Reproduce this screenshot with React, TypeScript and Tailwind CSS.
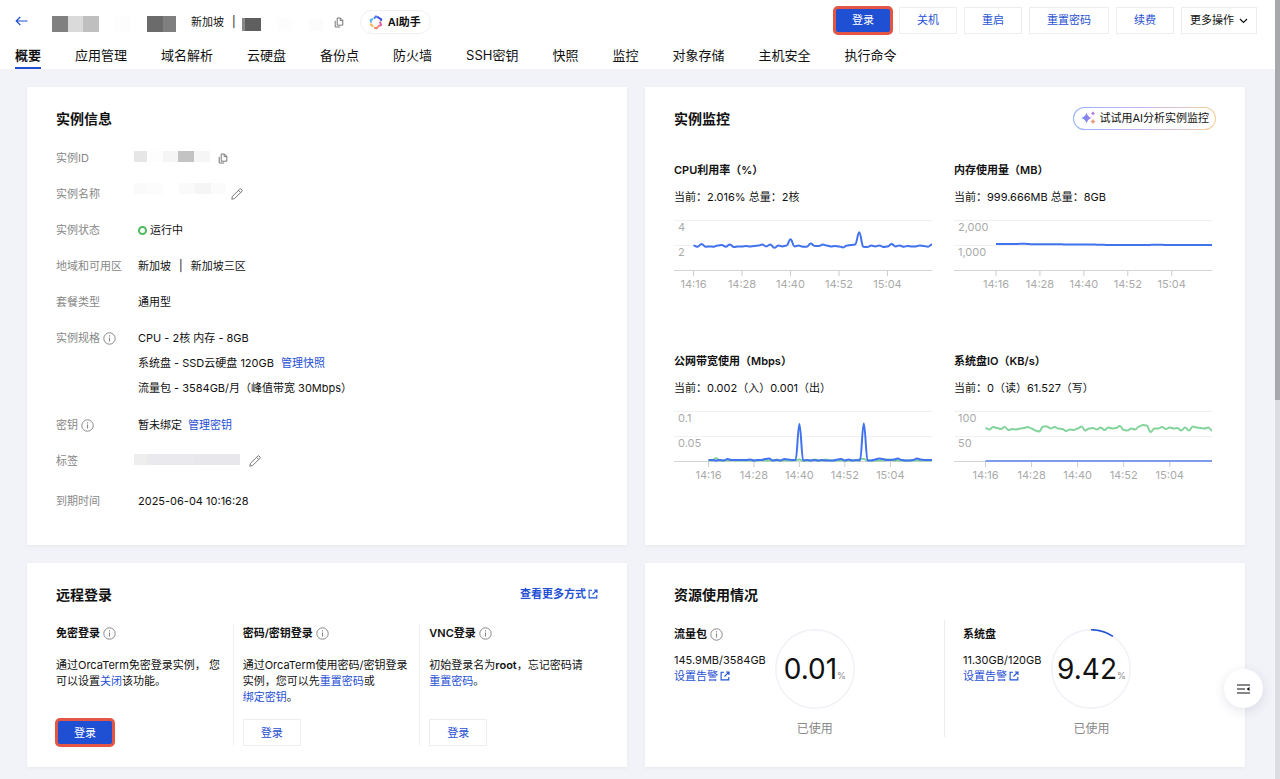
import type { ReactNode } from "react";
import clsx from "clsx";

const tabs = [
  "概要",
  "应用管理",
  "域名解析",
  "云硬盘",
  "备份点",
  "防火墙",
  "SSH密钥",
  "快照",
  "监控",
  "对象存储",
  "主机安全",
  "执行命令",
];

const times = ["14:16", "14:28", "14:40", "14:52", "15:04"];

// one sample per minute
const cpu = [
  1.97, 1.86, 2.08, 1.86, 1.89, 1.86, 1.95, 2, 1.86, 2.05, 1.84, 1.89, 1.89, 1.92, 1.89, 1.92, 1.95, 2.03, 1.89, 2.03,
  1.78, 1.95, 1.89, 1.95, 2.46, 1.89, 1.95, 1.86, 1.86, 2.11, 1.92, 1.92, 2.03, 1.95, 1.89, 1.92, 1.89, 1.81, 1.95, 2.01,
  2.05, 3.02, 1.86, 1.84, 1.95, 1.89, 1.97, 1.84, 1.89, 2.08, 1.89, 1.97, 1.86, 1.92, 1.89, 1.89, 1.97, 1.92, 1.86, 2.05,
];
const memory = [
  1045, 1045, 1044, 1045, 1044, 1043, 1042, 1046, 1048, 1036, 1030, 1028, 1027, 1030, 1031, 1030, 1032, 1030, 1026, 1020,
  1016, 1018, 1020, 1018, 1016, 1016, 1015, 1014, 1012, 1010, 1006, 1004, 1004, 1003, 1004, 1005, 1006, 1006, 1005, 1004,
  1004, 1003, 1004, 1008, 1008, 1007, 1006, 1005, 1000, 996, 996, 998, 1000, 1000, 999, 998, 998, 997, 997, 997,
];
const netIn = [
  0.002, 0.002, 0.001, 0.002, 0.001, 0.004, 0.002, 0.002, 0.002, 0.002, 0.002, 0.003, 0.001, 0.002, 0.002, 0.004, 0.005,
  0.001, 0.002, 0.001, 0.004, 0.003, 0.002, 0.002, 0.074, 0.001, 0.002, 0.001, 0.002, 0.001, 0.002, 0.001, 0.001, 0.001,
  0.003, 0.004, 0.001, 0.003, 0.001, 0.002, 0.001, 0.075, 0.001, 0.001, 0.003, 0.005, 0.004, 0.002, 0.002, 0.003, 0.005,
  0.002, 0.001, 0.001, 0.002, 0.005, 0.003, 0.002, 0.002, 0.002,
];
const netOut = [
  0.001, 0.001, 0.006, 0.001, 0.001, 0.001, 0.002, 0.001, 0.001, 0.001, 0.001, 0.001, 0.001, 0.001, 0.002, 0.001, 0.001,
  0.001, 0.003, 0.001, 0.001, 0.001, 0.001, 0.002, 0.003, 0.001, 0.001, 0.001, 0.003, 0.001, 0.001, 0.003, 0.001, 0.001,
  0.001, 0.001, 0.001, 0.001, 0.001, 0.001, 0.004, 0.004, 0.001, 0.001, 0.001, 0.001, 0.001, 0.003, 0.003, 0.001, 0.001,
  0.001, 0.001, 0.001, 0.001, 0.001, 0.001, 0.001, 0.001, 0.001,
];
const diskWrite = [
  66, 63, 68, 66, 64, 68, 62, 64, 63, 65, 66, 68, 65, 61, 59, 69, 69, 65, 68, 65, 64, 60, 63, 62, 65, 69, 61, 65, 66, 63,
  67, 62, 67, 65, 66, 70, 62, 61, 65, 63, 69, 72, 71, 58, 65, 65, 68, 64, 67, 65, 66, 61, 67, 61, 69, 67, 66, 65, 67, 61,
];
const diskRead = new Array(60).fill(0);

function smoothPath(values: number[], start: number, max: number) {
  const step = (258 - start) / (values.length - 1);
  const y = (v: number) => (55 - (v / max) * 50).toFixed(1);
  return values
    .map((v, i) => {
      const x = start + i * step;
      if (i === 0) return `M${x} ${y(v)}`;
      return `C${(x - step * 0.6).toFixed(1)} ${y(values[i - 1])} ${(x - step * 0.4).toFixed(1)} ${y(v)} ${x.toFixed(1)} ${y(v)}`;
    })
    .join("");
}

interface ChartProps {
  title: string;
  current: string;
  start: number;
  max: number;
  labels: [string, string];
  series: { values: number[]; color: string }[];
}

function Chart({ title, current, start, max, labels, series }: ChartProps) {
  const tickGap = ((258 - start) / 59) * 12;
  return (
    <section>
      <h3 className="font-semibold leading-[18px]">{title}</h3>
      <p className="mt-[9px] leading-[18px]">{current}</p>
      <svg viewBox="0 0 258 76" className="mt-[9px] w-full overflow-visible text-[11px]" role="img" aria-label={title}>
        <path d="M0 5.5H258M0 30.5H258" stroke="#f0f0f0" />
        <path d="M0 55.5H258" stroke="#d4d4d4" />
        {labels.map((label, i) => (
          <text key={label} x="4" y={16 + i * 25} fill="#aaa">
            {label}
          </text>
        ))}
        {times.map((time, i) => (
          <g key={time}>
            <path d={`M${start + i * tickGap} 56v5`} stroke="#ccc" />
            <text x={start + i * tickGap} y="73" textAnchor="middle" fill="#aaa">
              {time}
            </text>
          </g>
        ))}
        {series.map(({ values, color }) => (
          <path
            key={color}
            d={smoothPath(values, start, max)}
            fill="none"
            stroke={color}
            strokeWidth="2"
            strokeLinejoin="round"
          />
        ))}
      </svg>
    </section>
  );
}

function InfoIcon() {
  return (
    <svg width="13" height="13" viewBox="0 0 13 13" fill="none" stroke="#888" className="shrink-0">
      <circle cx="6.5" cy="6.5" r="5.7" />
      <path d="M6.5 5.6v4M6.5 3.2v1.2" strokeWidth="1.1" />
    </svg>
  );
}

function CopyIcon() {
  return (
    <svg width="10" height="11" viewBox="0 0 10 11" fill="none" stroke="#777">
      <path d="M3.2 1h3.3l2.3 2.3v4.9H3.2zM6.2 1v2.6h2.6M1.2 3.8V10h5" />
    </svg>
  );
}

function PencilIcon() {
  return (
    <svg width="12" height="12" viewBox="0 0 12 12" fill="none" stroke="#777" strokeLinejoin="round">
      <path d="M.8 11.2l.6-2.8L8.8 1q.6-.5 1.2 0l1 1q.5.6 0 1.2L3.6 10.6zM7.5 2.3l2.2 2.2" />
    </svg>
  );
}

function ExternalIcon() {
  return (
    <svg width="10" height="10" viewBox="0 0 10 10" fill="none" stroke="currentColor" strokeWidth="1.1">
      <path d="M4 1.2H1.1v7.7h7.7V6M6 1h3v3M8.8 1.2L4.5 5.5" />
    </svg>
  );
}

function AssistantIcon() {
  return (
    <svg width="14" height="15" viewBox="0 0 14 15" fill="none" strokeWidth="2">
      <path d="M2.2 7.6L1.7 4.8l2.4-1" stroke="#62b6f5" />
      <path d="M5 3.6l1.9-2.2 2.3 1" stroke="#4a7cf0" />
      <path d="M8.6 2.2l3.6 2.1-.2 1.5" stroke="#4350e8" />
      <path d="M11 6.6l1 3.5-2.6.8" stroke="#e05f9b" />
      <path d="M9.6 11.2l-2 2.2-2.6-.8" stroke="#f0866a" />
      <path d="M4.2 11.7L1.9 9.4l-.4-.9" stroke="#f2b552" />
    </svg>
  );
}

function SparkleIcon() {
  return (
    <svg width="15" height="14" viewBox="0 0 15 14">
      <defs>
        <linearGradient id="spark" x1="0" x2="1">
          <stop offset="0" stopColor="#5b8df6" />
          <stop offset="1" stopColor="#b57be8" />
        </linearGradient>
      </defs>
      <path d="M5.5 1.5q1 4.4 5.2 5.5-4.2 1.1-5.2 5.500-1-4.400-5.200-5.500 4.200-1.100 5.200-5.500z" fill="url(#spark)" />
      <path d="M12 .3q.5 1.500 2.200 2.100-1.700.6-2.200 2.100-.5-1.500-2.200-2.100Q11.500 1.800 12 .3z" fill="#b779e6" />
      <path d="M12 7.800q.6 2 2.700 2.600-2.100.6-2.700 2.600-.6-2-2.700-2.600 2.100-.6 2.700-2.600z" fill="#ee9a78" />
    </svg>
  );
}

function Link({ children, className }: { children: ReactNode; className?: string }) {
  return (
    <a href="#" className={clsx("whitespace-nowrap text-[#1f50d4]", className)}>
      {children}
    </a>
  );
}

function Button({ children, className }: { children: ReactNode; className?: string }) {
  return (
    <button
      type="button"
      className={clsx(
        "flex h-[27px] min-w-[58px] items-center justify-center gap-1 whitespace-nowrap border px-[17px]",
        className ?? "border-[#ededf0] bg-white text-[#1f50d4]",
      )}
    >
      {children}
    </button>
  );
}

// hidden part of an identifier, shown as grey cells
function Mask({ cells, className }: { cells: string[]; className: string }) {
  return (
    <span className={clsx("flex", className)}>
      {cells.map((cell, i) => (
        <span key={i} className={cell} />
      ))}
    </span>
  );
}

function Card({ title, action, className, children }: {
  title: string;
  action?: ReactNode;
  className?: string;
  children: ReactNode;
}) {
  return (
    <section className={clsx("bg-white pt-5 shadow-[0_1px_3px_rgba(50,60,110,0.06)]", className)}>
      <div className="flex h-[22px] items-center justify-between px-[29px]">
        <h2 className="text-[14px] font-bold">{title}</h2>
        {action}
      </div>
      {children}
    </section>
  );
}

function Row({ label, info, children }: { label: string; info?: boolean; children: ReactNode }) {
  return (
    <div className="flex">
      <dt className="flex h-9 w-[78px] shrink-0 items-center gap-[3px] whitespace-nowrap text-[#888]">
        {label}
        {info && <InfoIcon />}
      </dt>
      <dd className="flex min-h-9 items-center">{children}</dd>
    </div>
  );
}

function Gauge({ value, share }: { value: string; share: number }) {
  return (
    <div className="flex flex-col items-center pt-[9px]">
      <div className="grid size-20 place-items-center">
        <svg viewBox="0 0 80 80" fill="none" className="col-start-1 row-start-1 size-20 -rotate-90">
          <circle cx="40" cy="40" r="39.3" stroke="#f0f0f6" strokeWidth="1.4" />
          {share > 1 && (
            <circle
              cx="40"
              cy="40"
              r="39.3"
              stroke="#2556d6"
              strokeWidth="1.6"
              pathLength="100"
              strokeDasharray={`${share} 100`}
            />
          )}
        </svg>
        <p className="col-start-1 row-start-1 flex items-baseline">
          <span className="text-[28px] leading-9">{value}</span>
          <span className="text-[9px] text-[#888]">%</span>
        </p>
      </div>
      <p className="mt-3 text-[12px] leading-4 text-[#888]">已使用</p>
    </div>
  );
}

export default function App() {
  return (
    <div className="flex min-h-screen bg-[#f2f3f8] font-['Inter','Noto_Sans_CJK_SC',sans-serif] text-[11px] text-[#111]">
      <div className="min-w-0 flex-1">
        <header className="bg-white">
          <div className="flex h-[41px] items-center justify-between pl-[15px] pr-[18px]">
            <div className="flex items-center pt-[3px]">
              <button type="button" aria-label="返回" className="text-[#1f50d4]">
                <svg width="13" height="12" viewBox="0 0 13 12" fill="none" stroke="currentColor" strokeWidth="1.2">
                  <path d="M12.5 5H1.2M5.3 1L1.2 5l4.1 4" />
                </svg>
              </button>
              <Mask
                className="ml-6 mt-1 h-4"
                cells={[
                  "w-4 bg-[#808080]",
                  "w-[15px] bg-[#dadada]",
                  "w-4 bg-[#bfbfbf]",
                  "w-4",
                  "w-4 bg-[#fdfdfd]",
                  "w-4",
                  "w-4 bg-[#6b6b6b]",
                  "w-[13px] bg-[#7f7f7f]",
                ]}
              />
              <span className="ml-[15px]">新加坡</span>
              <span className="ml-2">|</span>
              <Mask
                className="ml-[6px] mt-1 h-[13px]"
                cells={[
                  "w-[3px] bg-[#888]",
                  "w-4 bg-[#5f5f5f]",
                  "w-4",
                  "w-[15px] bg-[#fdfdfd]",
                  "w-4",
                  "w-[15px] bg-[#fcfcfc]",
                ]}
              />
              <button type="button" aria-label="复制" className="ml-[11px]">
                <CopyIcon />
              </button>
              <button
                type="button"
                className="ml-4 flex h-6 items-center gap-[5px] rounded-full border border-[#f0f0f2] pl-2 pr-[9px] font-semibold"
              >
                <AssistantIcon />
                AI助手
              </button>
            </div>
            <div className="flex gap-[7px]">
              <Button className="rounded-sm border-[#1f50d4] bg-[#1f50d4] text-white outline-[3px] outline-offset-[-2px] outline-[#e35545]">
                登录
              </Button>
              <Button>关机</Button>
              <Button>重启</Button>
              <Button>重置密码</Button>
              <Button>续费</Button>
              <button
                type="button"
                className="flex h-[27px] items-center gap-[5px] whitespace-nowrap border border-[#ededf0] bg-white px-2"
              >
                更多操作
                <svg width="9" height="6" viewBox="0 0 9 6" fill="none" stroke="currentColor" strokeWidth="1.2">
                  <path d="M1 1l3.5 3.5L8 1" />
                </svg>
              </button>
            </div>
          </div>
          <nav className="flex gap-[34px] px-[15px] text-[13px]">
            {tabs.map((tab, i) => (
              <a
                key={tab}
                href="#"
                className={clsx(
                  "flex h-7 items-center whitespace-nowrap border-b-2 pt-1",
                  i === 0 ? "border-[#1f50d4] font-bold" : "border-transparent",
                )}
              >
                {tab}
              </a>
            ))}
          </nav>
        </header>

        <main className="grid grid-cols-2 gap-[18px] pb-3 pl-[27px] pr-[30px] pt-[18px]">
          <Card title="实例信息" className="pb-[26px]">
            <dl className="mt-[11px] px-[29px]">
              <Row label="实例ID">
                <Mask
                  className="mb-1 h-[11px]"
                  cells={[
                    "w-[13px] bg-[#e6e6e6]",
                    "w-4 bg-[#fdfdfd]",
                    "w-[15px] bg-[#f5f5f5]",
                    "w-4 bg-[#c3c3c3]",
                    "w-4 bg-[#f6f6f6]",
                  ]}
                />
                <button type="button" aria-label="复制实例ID" className="ml-2">
                  <CopyIcon />
                </button>
              </Row>
              <Row label="实例名称">
                <Mask
                  className="mb-3 h-[11px]"
                  cells={[
                    "w-[13px] bg-[#fafafa]",
                    "w-4 bg-[#fcfcfc]",
                    "w-4",
                    "w-4 bg-[#fafafa]",
                    "w-4 bg-[#f5f5f5]",
                    "w-[15px] bg-[#fbfbfb]",
                  ]}
                />
                <button type="button" aria-label="修改实例名称" className="ml-[5px]">
                  <PencilIcon />
                </button>
              </Row>
              <Row label="实例状态">
                <span className="ml-1 mr-[3px] size-[9px] rounded-full border-2 border-[#4cbb5d]" />
                运行中
              </Row>
              <Row label="地域和可用区">
                <span className="pl-1">新加坡</span>
                <span className="px-2">|</span>
                <span>新加坡三区</span>
              </Row>
              <Row label="套餐类型">
                <span className="pl-1">通用型</span>
              </Row>
              <Row label="实例规格" info>
                <div className="py-[6px] pl-1 leading-[25px]">
                  <p>CPU - 2核 内存 - 8GB</p>
                  <p>
                    系统盘 - SSD云硬盘 120GB <Link className="ml-1">管理快照</Link>
                  </p>
                  <p>流量包 - 3584GB/月（峰值带宽 30Mbps）</p>
                </div>
              </Row>
              <Row label="密钥" info>
                <span className="pl-1 pr-[6px]">暂未绑定</span>
                <Link>管理密钥</Link>
              </Row>
              <Row label="标签">
                <Mask
                  className="mb-1 h-[11px]"
                  cells={["w-[13px] bg-[#eee]", "w-12 bg-[#e9e9ee]", "w-[45px] bg-[#e7e7ec]"]}
                />
                <button type="button" aria-label="编辑标签" className="ml-[9px]">
                  <PencilIcon />
                </button>
              </Row>
              <div className="pt-1">
                <Row label="到期时间">
                  <span className="pl-1">2025-06-04 10:16:28</span>
                </Row>
              </div>
            </dl>
          </Card>

          <Card
            title="实例监控"
            action={
              <button
                type="button"
                className="rounded-full bg-linear-to-r from-[#8fb2fb] via-[#c9b5ee] to-[#f5cf98] p-px"
              >
                <span className="flex h-[21px] items-center gap-[3px] rounded-full bg-white pl-[7px] pr-[6px]">
                  <SparkleIcon />
                  试试用AI分析实例监控
                </span>
              </button>
            }
          >
            <div className="mt-8 grid grid-cols-2 gap-x-[22px] gap-y-[61px] pl-[29px] pr-[33px]">
              <Chart
                title="CPU利用率（%）"
                current="当前：2.016% 总量：2核"
                start={19.5}
                max={4}
                labels={["4", "2"]}
                series={[{ values: cpu, color: "#4273ee" }]}
              />
              <Chart
                title="内存使用量（MB）"
                current="当前：999.666MB 总量：8GB"
                start={42}
                max={2000}
                labels={["2,000", "1,000"]}
                series={[{ values: memory, color: "#4273ee" }]}
              />
              <Chart
                title="公网带宽使用（Mbps）"
                current="当前：0.002（入）0.001（出）"
                start={34.5}
                max={0.1}
                labels={["0.1", "0.05"]}
                series={[
                  { values: netOut, color: "#83d39b" },
                  { values: netIn, color: "#4273ee" },
                ]}
              />
              <Chart
                title="系统盘IO（KB/s）"
                current="当前：0（读）61.527（写）"
                start={31.5}
                max={100}
                labels={["100", "50"]}
                series={[
                  { values: diskWrite, color: "#83d39b" },
                  { values: diskRead, color: "#7f9cec" },
                ]}
              />
            </div>
          </Card>

          <Card
            title="远程登录"
            className="pb-[21px]"
            action={
              <Link className="flex items-center gap-[2px] font-semibold">
                查看更多方式
                <ExternalIcon />
              </Link>
            }
          >
            <div className="mt-[19px] grid grid-cols-3 divide-x divide-[#f0f0f2] px-5 leading-4">
              <div className="flex flex-col items-start px-[9px]">
                <h3 className="flex h-[18px] items-center gap-[3px] font-semibold">
                  免密登录 <InfoIcon />
                </h3>
                <p className="mb-[14px] mt-[15px] min-h-12">
                  通过OrcaTerm免密登录实例， 您可以设置<Link>关闭</Link>该功能。
                </p>
                <Button className="rounded-sm border-[#1f50d4] bg-[#1f50d4] text-white outline-[3px] outline-offset-[-2px] outline-[#e35545]">
                  登录
                </Button>
              </div>
              <div className="flex flex-col items-start px-[9px]">
                <h3 className="flex h-[18px] items-center gap-[3px] font-semibold">
                  密码/密钥登录 <InfoIcon />
                </h3>
                <p className="mb-[14px] mt-[15px] min-h-12">
                  通过OrcaTerm使用密码/密钥登录实例，您可以先<Link>重置密码</Link>或<Link>绑定密钥</Link>。
                </p>
                <Button>登录</Button>
              </div>
              <div className="flex flex-col items-start px-[9px]">
                <h3 className="flex h-[18px] items-center gap-[3px] font-semibold">
                  VNC登录 <InfoIcon />
                </h3>
                <p className="mb-[14px] mt-[15px] min-h-12">
                  初始登录名为<b className="font-semibold">root</b>，忘记密码请<Link>重置密码</Link>。
                </p>
                <Button>登录</Button>
              </div>
            </div>
          </Card>

          <Card title="资源使用情况">
            <div className="mt-[15px] grid grid-cols-2 px-[29px]">
              <div className="flex h-[117px] gap-[9px] border-r border-[#ececf0] leading-4">
                <div className="pt-[5px]">
                  <h3 className="flex h-[18px] items-center gap-[3px] font-semibold">
                    流量包 <InfoIcon />
                  </h3>
                  <p className="mt-[9px]">145.9MB/3584GB</p>
                  <Link className="flex items-center gap-[2px]">
                    设置告警 <ExternalIcon />
                  </Link>
                </div>
                <Gauge value="0.01" share={0.01} />
              </div>
              <div className="flex gap-[10px] pl-[18px] leading-4">
                <div className="pt-[5px]">
                  <h3 className="h-[18px] font-semibold leading-[18px]">系统盘</h3>
                  <p className="mt-[9px]">11.30GB/120GB</p>
                  <Link className="flex items-center gap-[2px]">
                    设置告警 <ExternalIcon />
                  </Link>
                </div>
                <Gauge value="9.42" share={9.42} />
              </div>
            </div>
          </Card>
        </main>
      </div>

      <div className="w-[5px] shrink-0 bg-[#dcdde0]">
        <div className="h-[400px] bg-[#a7a8ac]" />
      </div>

      <button
        type="button"
        aria-label="展开侧栏"
        className="fixed bottom-[71px] right-[17px] grid size-[39px] place-items-center rounded-full bg-white shadow-[0_3px_12px_rgba(30,40,80,0.12)]"
      >
        <svg width="13" height="10" viewBox="0 0 13 10" fill="none" stroke="#111" strokeWidth="1.1">
          <path d="M0 1h13M0 5h8M0 9h13" />
          <path d="M12.5 3v4L9.5 5z" fill="#111" stroke="none" />
        </svg>
      </button>
    </div>
  );
}
